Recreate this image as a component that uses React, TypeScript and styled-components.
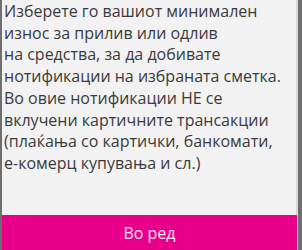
import React from "react";
import styled, { createGlobalStyle } from "styled-components";

const Global = createGlobalStyle`
  html, body { margin: 0; padding: 0; background: #6f6f6f; }
  body { font-family: "Open Sans", "Noto Sans", sans-serif; }
`;

const Screen = styled.div`
  width: 302px;
  height: 250px;
  box-sizing: border-box;
  padding: 0 4px 0 2px;
  display: flex;
  background: #6f6f6f;
`;

const Dialog = styled.div`
  flex: 1;
  display: flex;
  flex-direction: column;
  background: #f2f2f2;
  border-right: 2px solid #d9d9d9;
`;

const Body = styled.div`
  flex: 1;
  padding: 1px 6px 0 2px;
  color: #3a3a3a;
  font-size: 16px;
  line-height: 21.7px;
`;

const Button = styled.button`
  height: 35px;
  margin-right: -1px;
  border: none;
  background: #e8008a;
  color: #fbe3f0;
  font-family: "Open Sans", "Noto Sans", sans-serif;
  font-size: 16px;
  padding: 0;
`;

export default function App() {
  return (
    <>
      <Global />
      <Screen>
        <Dialog>
          <Body>
            Изберете го вашиот минимален износ за прилив или одлив
            <br />
            на средства, за да добивате нотификации на избраната сметка.
            <br />
            Во овие нотификации НЕ се вклучени картичните трансакции (плаќања со картички, банкомати, е-комерц купувања и сл.)
          </Body>
          <Button>Во ред</Button>
        </Dialog>
      </Screen>
    </>
  );
}
